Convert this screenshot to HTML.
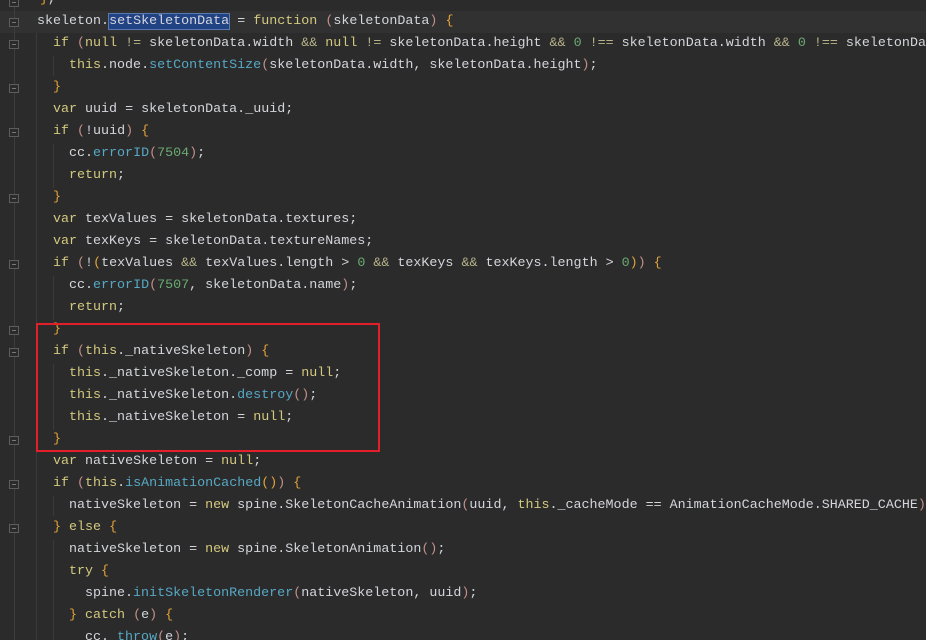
<!DOCTYPE html>
<html><head><meta charset="utf-8"><style>
html,body{margin:0;padding:0;background:#2b2b2b;width:926px;height:640px;overflow:hidden}
.wrap{position:relative;width:926px;height:640px;overflow:hidden}
.ln{position:absolute;left:37px;height:22px;line-height:22px;white-space:pre;font-family:"Liberation Mono",monospace;font-size:13.35px;color:#d4d6dc}
.k{color:#d3c97f}.f{color:#56a8c5}.n{color:#6aab73}.b{color:#e3a33a}.p{color:#c48f8a}.o{color:#b7b48a}
.sel{background:#214283;outline:1px solid #5a78b0}
.cur{position:absolute;left:0;top:11px;width:926px;height:22px;background:#313131}
.gut{position:absolute;left:14px;top:0;width:1px;height:640px;background:#3d3d3d}
.fold{position:absolute;left:9px;width:10px;height:9px;border:1px solid #5d5d5d;box-sizing:border-box;background:#2b2b2b}
.fold:after{content:"";position:absolute;left:2px;top:3px;width:4px;height:1px;background:#777}
.guide{position:absolute;width:1px;background:#3a3a3a}
.box{position:absolute;left:36px;top:323px;width:344px;height:129px;border:2px solid #e3202a;box-sizing:border-box}
</style></head><body><div class="wrap">
<div class="cur"></div>
<div class="gut"></div>
<div class="fold" style="top:-2px"></div>
<div class="fold" style="top:18px"></div>
<div class="fold" style="top:40px"></div>
<div class="fold" style="top:84px"></div>
<div class="fold" style="top:128px"></div>
<div class="fold" style="top:194px"></div>
<div class="fold" style="top:260px"></div>
<div class="fold" style="top:326px"></div>
<div class="fold" style="top:348px"></div>
<div class="fold" style="top:436px"></div>
<div class="fold" style="top:480px"></div>
<div class="fold" style="top:524px"></div>
<div class="guide" style="left:36px;top:33px;height:610px"></div>
<div class="guide" style="left:53px;top:56px;height:20px"></div>
<div class="guide" style="left:53px;top:144px;height:44px"></div>
<div class="guide" style="left:53px;top:276px;height:44px"></div>
<div class="guide" style="left:53px;top:364px;height:66px"></div>
<div class="guide" style="left:53px;top:496px;height:20px"></div>
<div class="guide" style="left:53px;top:540px;height:100px"></div>
<div class="ln" style="top:-11px;left:32px">=<span class="b">}</span>,</div>
<div class="ln" style="top:11px">skeleton.<span class="sel">setSkeletonData</span> = <span class="k">function</span> <span class="p">(</span>skeletonData<span class="p">)</span> <span class="b">{</span></div>
<div class="ln" style="top:33px;left:53px"><span class="k">if</span> <span class="p">(</span><span class="k">null</span> <span class="o">!=</span> skeletonData.width <span class="o">&amp;&amp;</span> <span class="k">null</span> <span class="o">!=</span> skeletonData.height <span class="o">&amp;&amp;</span> <span class="n">0</span> <span class="o">!==</span> skeletonData.width <span class="o">&amp;&amp;</span> <span class="n">0</span> <span class="o">!==</span> skeletonDa</div>
<div class="ln" style="top:55px;left:69px"><span class="k">this</span>.node.<span class="f">setContentSize</span><span class="p">(</span>skeletonData.width, skeletonData.height<span class="p">)</span>;</div>
<div class="ln" style="top:77px;left:53px"><span class="b">}</span></div>
<div class="ln" style="top:99px;left:53px"><span class="k">var</span> uuid = skeletonData._uuid;</div>
<div class="ln" style="top:121px;left:53px"><span class="k">if</span> <span class="p">(</span>!uuid<span class="p">)</span> <span class="b">{</span></div>
<div class="ln" style="top:143px;left:69px">cc.<span class="f">errorID</span><span class="p">(</span><span class="n">7504</span><span class="p">)</span>;</div>
<div class="ln" style="top:165px;left:69px"><span class="k">return</span>;</div>
<div class="ln" style="top:187px;left:53px"><span class="b">}</span></div>
<div class="ln" style="top:209px;left:53px"><span class="k">var</span> texValues = skeletonData.textures;</div>
<div class="ln" style="top:231px;left:53px"><span class="k">var</span> texKeys = skeletonData.textureNames;</div>
<div class="ln" style="top:253px;left:53px"><span class="k">if</span> <span class="p">(</span>!<span class="b">(</span>texValues <span class="o">&amp;&amp;</span> texValues.length &gt; <span class="n">0</span> <span class="o">&amp;&amp;</span> texKeys <span class="o">&amp;&amp;</span> texKeys.length &gt; <span class="n">0</span><span class="b">)</span><span class="p">)</span> <span class="b">{</span></div>
<div class="ln" style="top:275px;left:69px">cc.<span class="f">errorID</span><span class="p">(</span><span class="n">7507</span>, skeletonData.name<span class="p">)</span>;</div>
<div class="ln" style="top:297px;left:69px"><span class="k">return</span>;</div>
<div class="ln" style="top:319px;left:53px"><span class="b">}</span></div>
<div class="ln" style="top:341px;left:53px"><span class="k">if</span> <span class="p">(</span><span class="k">this</span>._nativeSkeleton<span class="p">)</span> <span class="b">{</span></div>
<div class="ln" style="top:363px;left:69px"><span class="k">this</span>._nativeSkeleton._comp = <span class="k">null</span>;</div>
<div class="ln" style="top:385px;left:69px"><span class="k">this</span>._nativeSkeleton.<span class="f">destroy</span><span class="p">()</span>;</div>
<div class="ln" style="top:407px;left:69px"><span class="k">this</span>._nativeSkeleton = <span class="k">null</span>;</div>
<div class="ln" style="top:429px;left:53px"><span class="b">}</span></div>
<div class="ln" style="top:451px;left:53px"><span class="k">var</span> nativeSkeleton = <span class="k">null</span>;</div>
<div class="ln" style="top:473px;left:53px"><span class="k">if</span> <span class="p">(</span><span class="k">this</span>.<span class="f">isAnimationCached</span><span class="b">()</span><span class="p">)</span> <span class="b">{</span></div>
<div class="ln" style="top:495px;left:69px">nativeSkeleton = <span class="k">new</span> spine.SkeletonCacheAnimation<span class="p">(</span>uuid, <span class="k">this</span>._cacheMode == AnimationCacheMode.SHARED_CACHE<span class="p">)</span></div>
<div class="ln" style="top:517px;left:53px"><span class="b">}</span> <span class="k">else</span> <span class="b">{</span></div>
<div class="ln" style="top:539px;left:69px">nativeSkeleton = <span class="k">new</span> spine.SkeletonAnimation<span class="p">()</span>;</div>
<div class="ln" style="top:561px;left:69px"><span class="k">try</span> <span class="b">{</span></div>
<div class="ln" style="top:583px;left:85px">spine.<span class="f">initSkeletonRenderer</span><span class="p">(</span>nativeSkeleton, uuid<span class="p">)</span>;</div>
<div class="ln" style="top:605px;left:69px"><span class="b">}</span> <span class="k">catch</span> <span class="p">(</span>e<span class="p">)</span> <span class="b">{</span></div>
<div class="ln" style="top:627px;left:85px">cc.<span class="f">_throw</span><span class="p">(</span>e<span class="p">)</span>;</div>
<div class="box"></div>
</div></body></html>
